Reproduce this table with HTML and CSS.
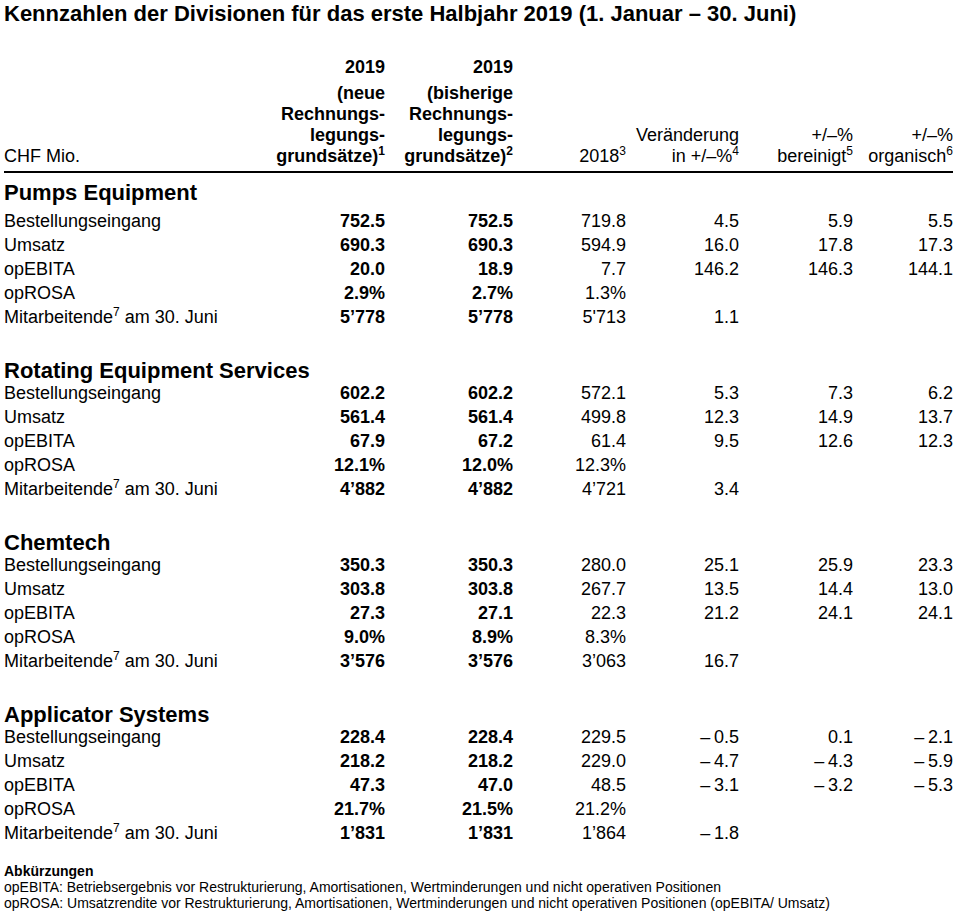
FILE: index.html
```html
<!DOCTYPE html>
<html lang="de">
<head>
<meta charset="utf-8">
<title>Kennzahlen der Divisionen</title>
<link rel="stylesheet" href="styles.css">
</head>
<body>
<div class="page">
  <h1 class="title">Kennzahlen der Divisionen für das erste Halbjahr 2019 (1. Januar – 30. Juni)</h1>
  <table class="kpi">
    <colgroup>
      <col class="c-label"><col class="c-1"><col class="c-2"><col class="c-3"><col class="c-4"><col class="c-5"><col class="c-6">
    </colgroup>
    <thead>
      <tr class="head-row">
        <th class="h-label">CHF Mio.</th>
        <th class="h-num bold"><div class="year">2019</div>(neue<br>Rechnungs-<br>legungs-<br>grundsätze)<sup>1</sup></th>
        <th class="h-num bold"><div class="year">2019</div>(bisherige<br>Rechnungs-<br>legungs-<br>grundsätze)<sup>2</sup></th>
        <th class="h-num">2018<sup>3</sup></th>
        <th class="h-num">Veränderung<br>in +/–%<sup>4</sup></th>
        <th class="h-num">+/–%<br>bereinigt<sup>5</sup></th>
        <th class="h-num">+/–%<br>organisch<sup>6</sup></th>
      </tr>
    </thead>
    <tbody class="section first">
      <tr class="sec-row"><th colspan="7" class="sec-title">Pumps Equipment</th></tr>
      <tr><td>Bestellungseingang</td><td class="b">752.5</td><td class="b">752.5</td><td>719.8</td><td>4.5</td><td>5.9</td><td>5.5</td></tr>
      <tr><td>Umsatz</td><td class="b">690.3</td><td class="b">690.3</td><td>594.9</td><td>16.0</td><td>17.8</td><td>17.3</td></tr>
      <tr><td>opEBITA</td><td class="b">20.0</td><td class="b">18.9</td><td>7.7</td><td>146.2</td><td>146.3</td><td>144.1</td></tr>
      <tr><td>opROSA</td><td class="b">2.9%</td><td class="b">2.7%</td><td>1.3%</td><td></td><td></td><td></td></tr>
      <tr><td>Mitarbeitende<sup>7</sup> am 30. Juni</td><td class="b">5’778</td><td class="b">5’778</td><td>5'713</td><td>1.1</td><td></td><td></td></tr>
    </tbody>
    <tbody class="section">
      <tr class="sec-row"><th colspan="7" class="sec-title">Rotating Equipment Services</th></tr>
      <tr><td>Bestellungseingang</td><td class="b">602.2</td><td class="b">602.2</td><td>572.1</td><td>5.3</td><td>7.3</td><td>6.2</td></tr>
      <tr><td>Umsatz</td><td class="b">561.4</td><td class="b">561.4</td><td>499.8</td><td>12.3</td><td>14.9</td><td>13.7</td></tr>
      <tr><td>opEBITA</td><td class="b">67.9</td><td class="b">67.2</td><td>61.4</td><td>9.5</td><td>12.6</td><td>12.3</td></tr>
      <tr><td>opROSA</td><td class="b">12.1%</td><td class="b">12.0%</td><td>12.3%</td><td></td><td></td><td></td></tr>
      <tr><td>Mitarbeitende<sup>7</sup> am 30. Juni</td><td class="b">4’882</td><td class="b">4’882</td><td>4’721</td><td>3.4</td><td></td><td></td></tr>
    </tbody>
    <tbody class="section">
      <tr class="sec-row"><th colspan="7" class="sec-title">Chemtech</th></tr>
      <tr><td>Bestellungseingang</td><td class="b">350.3</td><td class="b">350.3</td><td>280.0</td><td>25.1</td><td>25.9</td><td>23.3</td></tr>
      <tr><td>Umsatz</td><td class="b">303.8</td><td class="b">303.8</td><td>267.7</td><td>13.5</td><td>14.4</td><td>13.0</td></tr>
      <tr><td>opEBITA</td><td class="b">27.3</td><td class="b">27.1</td><td>22.3</td><td>21.2</td><td>24.1</td><td>24.1</td></tr>
      <tr><td>opROSA</td><td class="b">9.0%</td><td class="b">8.9%</td><td>8.3%</td><td></td><td></td><td></td></tr>
      <tr><td>Mitarbeitende<sup>7</sup> am 30. Juni</td><td class="b">3’576</td><td class="b">3’576</td><td>3’063</td><td>16.7</td><td></td><td></td></tr>
    </tbody>
    <tbody class="section">
      <tr class="sec-row"><th colspan="7" class="sec-title">Applicator Systems</th></tr>
      <tr><td>Bestellungseingang</td><td class="b">228.4</td><td class="b">228.4</td><td>229.5</td><td>–&thinsp;0.5</td><td>0.1</td><td>–&thinsp;2.1</td></tr>
      <tr><td>Umsatz</td><td class="b">218.2</td><td class="b">218.2</td><td>229.0</td><td>–&thinsp;4.7</td><td>–&thinsp;4.3</td><td>–&thinsp;5.9</td></tr>
      <tr><td>opEBITA</td><td class="b">47.3</td><td class="b">47.0</td><td>48.5</td><td>–&thinsp;3.1</td><td>–&thinsp;3.2</td><td>–&thinsp;5.3</td></tr>
      <tr><td>opROSA</td><td class="b">21.7%</td><td class="b">21.5%</td><td>21.2%</td><td></td><td></td><td></td></tr>
      <tr><td>Mitarbeitende<sup>7</sup> am 30. Juni</td><td class="b">1’831</td><td class="b">1’831</td><td>1’864</td><td>–&thinsp;1.8</td><td></td><td></td></tr>
    </tbody>
  </table>
  <div class="notes">
    <div class="notes-title">Abkürzungen</div>
    <div>opEBITA: Betriebsergebnis vor Restrukturierung, Amortisationen, Wertminderungen und nicht operativen Positionen</div>
    <div>opROSA: Umsatzrendite vor Restrukturierung, Amortisationen, Wertminderungen und nicht operativen Positionen (opEBITA/ Umsatz)</div>
  </div>
</div>
</body>
</html>
```
FILE: styles.css
```css
html, body {
  margin: 0;
  padding: 0;
  background: #ffffff;
}
body {
  font-family: "Liberation Sans", Arial, sans-serif;
  color: #000000;
}
.page {
  padding: 0 4px;
}
.title {
  margin: 0;
  font-size: 22px;
  line-height: 28px;
  font-weight: bold;
}
.kpi {
  width: 949px;
  table-layout: fixed;
  border-collapse: collapse;
  margin-top: 29px;
  font-size: 18px;
}
.c-label { width: 271px; }
.c-1 { width: 110px; }
.c-2 { width: 128px; }
.c-3 { width: 113px; }
.c-4 { width: 113px; }
.c-5 { width: 114px; }
.c-6 { width: 100px; }

.kpi th, .kpi td {
  padding: 0;
  white-space: nowrap;
}
.kpi .head-row th {
  font-weight: normal;
  line-height: 21px;
  vertical-align: bottom;
  padding-bottom: 4px;
  border-bottom: 2px solid #000;
}
.kpi .h-label { text-align: left; }
.kpi .h-num { text-align: right; }
.kpi .h-num.bold { font-weight: bold; }
.year {
  margin-bottom: 5px;
}
sup {
  font-size: 12px;
  line-height: 0;
  vertical-align: 7px;
}
.kpi .sec-title {
  text-align: left;
  font-size: 22px;
  line-height: 20px;
  font-weight: bold;
  padding-top: 32px;
  padding-bottom: 0;
}
.kpi .first .sec-title {
  padding-top: 10px;
  padding-bottom: 6px;
}
.section td {
  line-height: 24px;
  height: 24px;
  text-align: right;
}
.section td:first-child {
  text-align: left;
}
.section td.b {
  font-weight: bold;
}
.notes {
  margin-top: 18px;
  font-size: 14px;
  line-height: 16px;
}
.notes-title {
  font-weight: bold;
}
```
